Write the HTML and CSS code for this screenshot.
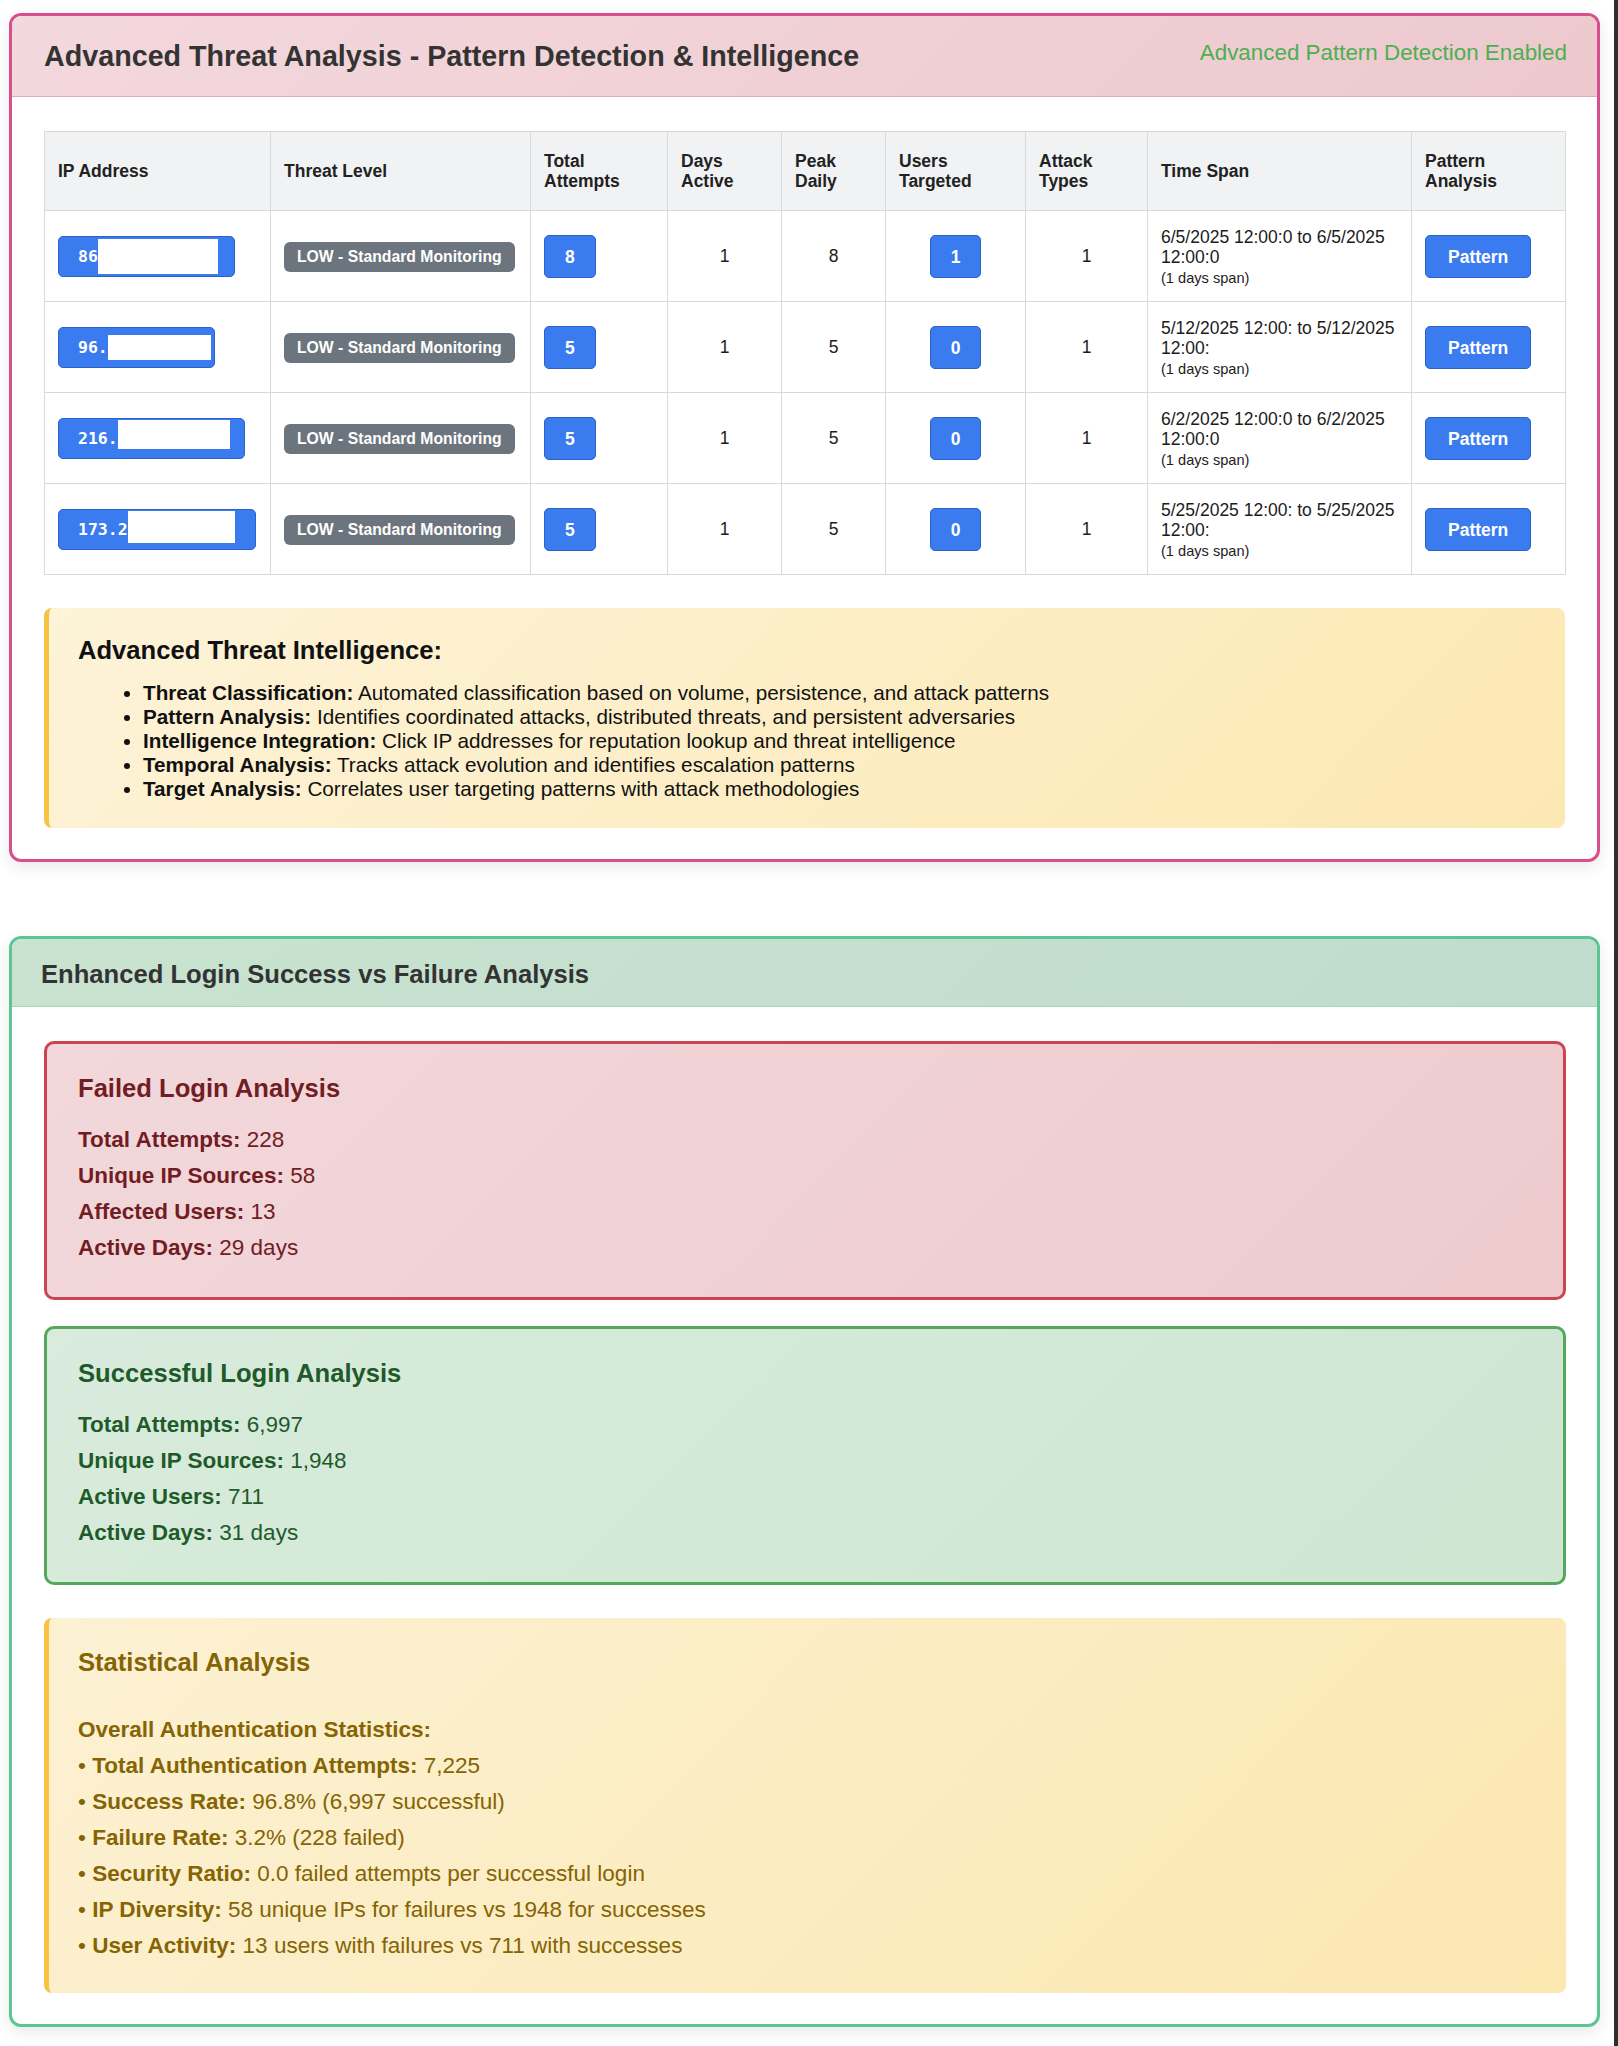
FILE: index.html
```html
<!DOCTYPE html>
<html lang="en">
<head>
<meta charset="utf-8">
<title>Threat Analysis</title>
<link rel="stylesheet" href="styles.css">
</head>
<body>
<div class="page">
  <section class="card card-threat">
    <header class="card-head head-threat">
      <h2 class="card-title">Advanced Threat Analysis - Pattern Detection &amp; Intelligence</h2>
      <span class="head-status">Advanced Pattern Detection Enabled</span>
    </header>
    <div class="card-body body-threat">
      <table class="threat-table">
        <colgroup>
          <col class="c-ip"><col class="c-level"><col class="c-total"><col class="c-days"><col class="c-peak"><col class="c-users"><col class="c-types"><col class="c-span"><col class="c-pattern">
        </colgroup>
        <thead>
          <tr>
            <th>IP Address</th>
            <th>Threat Level</th>
            <th>Total<br>Attempts</th>
            <th>Days<br>Active</th>
            <th>Peak<br>Daily</th>
            <th>Users<br>Targeted</th>
            <th>Attack<br>Types</th>
            <th>Time Span</th>
            <th>Pattern<br>Analysis</th>
          </tr>
        </thead>
        <tbody>
          <tr>
            <td><span class="ip-btn">86<span class="redact" style="width:120px;height:35px;margin-top:2px"></span></span></td>
            <td><span class="level-badge">LOW - Standard Monitoring</span></td>
            <td><span class="count-btn">8</span></td>
            <td class="num">1</td>
            <td class="num">8</td>
            <td class="num"><span class="count-btn">1</span></td>
            <td class="num">1</td>
            <td class="span-cell">6/5/2025 12:00:0 to 6/5/2025 12:00:0<small>(1 days span)</small></td>
            <td><span class="pattern-btn">Pattern</span></td>
          </tr>
          <tr>
            <td><span class="ip-btn ip-short">96.<span class="redact" style="width:103px;height:25px;margin-top:7px"></span></span></td>
            <td><span class="level-badge">LOW - Standard Monitoring</span></td>
            <td><span class="count-btn">5</span></td>
            <td class="num">1</td>
            <td class="num">5</td>
            <td class="num"><span class="count-btn">0</span></td>
            <td class="num">1</td>
            <td class="span-cell">5/12/2025 12:00: to 5/12/2025 12:00:<small>(1 days span)</small></td>
            <td><span class="pattern-btn">Pattern</span></td>
          </tr>
          <tr>
            <td><span class="ip-btn ip-mid">216.<span class="redact" style="width:112px;height:29px;margin-top:1px"></span></span></td>
            <td><span class="level-badge">LOW - Standard Monitoring</span></td>
            <td><span class="count-btn">5</span></td>
            <td class="num">1</td>
            <td class="num">5</td>
            <td class="num"><span class="count-btn">0</span></td>
            <td class="num">1</td>
            <td class="span-cell">6/2/2025 12:00:0 to 6/2/2025 12:00:0<small>(1 days span)</small></td>
            <td><span class="pattern-btn">Pattern</span></td>
          </tr>
          <tr>
            <td><span class="ip-btn ip-long">173.2<span class="redact" style="width:107px;height:32px;margin-top:1px"></span></span></td>
            <td><span class="level-badge">LOW - Standard Monitoring</span></td>
            <td><span class="count-btn">5</span></td>
            <td class="num">1</td>
            <td class="num">5</td>
            <td class="num"><span class="count-btn">0</span></td>
            <td class="num">1</td>
            <td class="span-cell">5/25/2025 12:00: to 5/25/2025 12:00:<small>(1 days span)</small></td>
            <td><span class="pattern-btn">Pattern</span></td>
          </tr>
        </tbody>
      </table>

      <div class="intel-box">
        <h4 class="intel-title">Advanced Threat Intelligence:</h4>
        <ul class="intel-list">
          <li><strong>Threat Classification:</strong> Automated classification based on volume, persistence, and attack patterns</li>
          <li><strong>Pattern Analysis:</strong> Identifies coordinated attacks, distributed threats, and persistent adversaries</li>
          <li><strong>Intelligence Integration:</strong> Click IP addresses for reputation lookup and threat intelligence</li>
          <li><strong>Temporal Analysis:</strong> Tracks attack evolution and identifies escalation patterns</li>
          <li><strong>Target Analysis:</strong> Correlates user targeting patterns with attack methodologies</li>
        </ul>
      </div>
    </div>
  </section>

  <section class="card card-login">
    <header class="card-head head-login">
      <h2 class="card-title title-login">Enhanced Login Success vs Failure Analysis</h2>
    </header>
    <div class="card-body body-login">
      <div class="stat-box box-failed">
        <h3 class="stat-title">Failed Login Analysis</h3>
        <p class="stat-line"><strong>Total Attempts:</strong> 228</p>
        <p class="stat-line"><strong>Unique IP Sources:</strong> 58</p>
        <p class="stat-line"><strong>Affected Users:</strong> 13</p>
        <p class="stat-line"><strong>Active Days:</strong> 29 days</p>
      </div>
      <div class="stat-box box-success">
        <h3 class="stat-title">Successful Login Analysis</h3>
        <p class="stat-line"><strong>Total Attempts:</strong> 6,997</p>
        <p class="stat-line"><strong>Unique IP Sources:</strong> 1,948</p>
        <p class="stat-line"><strong>Active Users:</strong> 711</p>
        <p class="stat-line"><strong>Active Days:</strong> 31 days</p>
      </div>
      <div class="stat-box box-stats">
        <h3 class="stat-title">Statistical Analysis</h3>
        <p class="stat-line stat-lead"><strong>Overall Authentication Statistics:</strong></p>
        <p class="stat-line">• <strong>Total Authentication Attempts:</strong> 7,225</p>
        <p class="stat-line">• <strong>Success Rate:</strong> 96.8% (6,997 successful)</p>
        <p class="stat-line">• <strong>Failure Rate:</strong> 3.2% (228 failed)</p>
        <p class="stat-line">• <strong>Security Ratio:</strong> 0.0 failed attempts per successful login</p>
        <p class="stat-line">• <strong>IP Diversity:</strong> 58 unique IPs for failures vs 1948 for successes</p>
        <p class="stat-line">• <strong>User Activity:</strong> 13 users with failures vs 711 with successes</p>
      </div>
    </div>
  </section>
</div>
</body>
</html>
```

FILE: styles.css
```css
html {
  background: #2f2f2f;
}

body {
  margin: 0 4px 0 0;
  background: #ffffff;
  min-height: 2046px;
  font-family: "Liberation Sans", Arial, Helvetica, sans-serif;
  color: #1c1c1c;
}

.page {
  padding: 13px 14px 0 9px;
}

.card {
  border: 3px solid #d94f8c;
  border-radius: 12px;
  background: #ffffff;
  box-shadow: 0 5px 16px rgba(0, 0, 0, 0.09);
  overflow: hidden;
}

.card-login {
  margin-top: 74px;
  border-color: #5cc594;
}

.card-head {
  display: flex;
  justify-content: space-between;
  align-items: flex-start;
}

.head-threat {
  padding: 24px 30px 23px 32px;
  background: linear-gradient(135deg, #f3d8dd 0%, #edc9ce 100%);
  border-bottom: 1px solid #e7a9b6;
}

.head-login {
  padding: 21px 30px 17px 29px;
  background: linear-gradient(135deg, #c9e3d0 0%, #c0dccd 100%);
  border-bottom: 1px solid #a9d4bc;
}

.card-title {
  margin: 0;
  font-size: 28.7px;
  line-height: 33px;
  font-weight: bold;
  color: #333333;
}

.title-login {
  font-size: 25.6px;
  line-height: 29px;
}

.head-status {
  font-size: 22.4px;
  line-height: 26px;
  color: #4caf50;
}

.body-threat {
  padding: 34px 32px 31px 32px;
}

.body-login {
  padding: 34px 31px 31px 32px;
}

/* table */
.threat-table {
  width: 100%;
  table-layout: fixed;
  border-collapse: collapse;
  font-size: 17.5px;
}

.c-ip { width: 226px; }
.c-level { width: 260px; }
.c-total { width: 137px; }
.c-days { width: 114px; }
.c-peak { width: 104px; }
.c-users { width: 140px; }
.c-types { width: 122px; }
.c-span { width: 264px; }
.c-pattern { width: 154px; }

.threat-table th,
.threat-table td {
  border: 1px solid #d9d9d9;
  text-align: left;
  vertical-align: middle;
}

.threat-table th {
  background: #f1f2f4;
  padding: 19px 13px;
  line-height: 20px;
  font-weight: bold;
  color: #222222;
}

.threat-table td {
  padding: 15.5px 13px 14.5px;
  line-height: 20.5px;
  color: #1c1c1c;
}

.threat-table td.num {
  text-align: center;
}

.span-cell small {
  display: block;
  margin-top: 2px;
  font-size: 14.6px;
  line-height: 17px;
}

.ip-btn {
  display: inline-flex;
  align-items: flex-start;
  box-sizing: border-box;
  height: 41px;
  padding: 10px 16px 0 19px;
  background: #3a7cef;
  border: 1px solid #2b62c9;
  border-radius: 5px;
  color: #ffffff;
  font-family: "DejaVu Sans Mono", "Liberation Mono", monospace;
  font-weight: bold;
  font-size: 16.5px;
  line-height: 19px;
  vertical-align: middle;
}

.ip-short { padding-right: 3px; }
.ip-mid { padding-right: 14px; }
.ip-long { padding-right: 20px; }

.redact {
  display: inline-block;
  flex: none;
  align-self: flex-start;
  position: relative;
  top: -10px;
  background: #ffffff;
}

.level-badge {
  display: inline-block;
  padding: 6px 13px;
  background: #6c757d;
  border-radius: 6px;
  color: #ffffff;
  font-weight: bold;
  font-size: 15.75px;
  line-height: 18px;
  white-space: nowrap;
  vertical-align: middle;
}

.count-btn,
.pattern-btn {
  display: inline-block;
  padding: 10.5px 20px;
  background: #3a7cef;
  border: 1px solid #2b62c9;
  border-radius: 5px;
  color: #ffffff;
  font-weight: bold;
  font-size: 17.5px;
  line-height: 20px;
  vertical-align: middle;
}

.pattern-btn {
  padding-left: 22px;
  padding-right: 22px;
}

/* intel box */
.intel-box {
  margin-top: 33px;
  padding: 28px 30px 27px 29px;
  border-left: 5px solid #f6c343;
  border-radius: 8px;
  background: linear-gradient(135deg, #fdf3d8 0%, #fce8b2 100%);
  color: #111111;
}

.intel-title {
  margin: 0;
  font-size: 25.6px;
  line-height: 29px;
  font-weight: bold;
}

.intel-list {
  margin: 16px 0 0;
  padding-left: 65px;
  font-size: 20.7px;
  line-height: 24px;
}

/* login stats */
.stat-box {
  padding: 30px 31px 31px 31px;
  border: 3px solid #cc4451;
  border-radius: 10px;
}

.stat-box + .stat-box {
  margin-top: 26px;
}

.box-failed {
  background: linear-gradient(135deg, #f2d8db 0%, #eecacd 100%);
  color: #721c24;
}

.box-success {
  border-color: #55a75c;
  background: linear-gradient(135deg, #d8ebdc 0%, #cfe6d3 100%);
  color: #1f5a2a;
}

.box-stats {
  margin-top: 33px !important;
  padding: 30px 31px 29px 29px;
  border: none;
  border-left: 5px solid #f6c343;
  border-radius: 8px;
  background: linear-gradient(135deg, #fcf1d3 0%, #fbe7b0 100%);
  color: #856404;
}

.stat-title {
  margin: 0 0 19px;
  font-size: 25.6px;
  line-height: 29px;
  font-weight: bold;
}

.stat-line {
  margin: 0;
  font-size: 22.5px;
  line-height: 36px;
}

.stat-lead {
  margin-top: 35px;
}
```
